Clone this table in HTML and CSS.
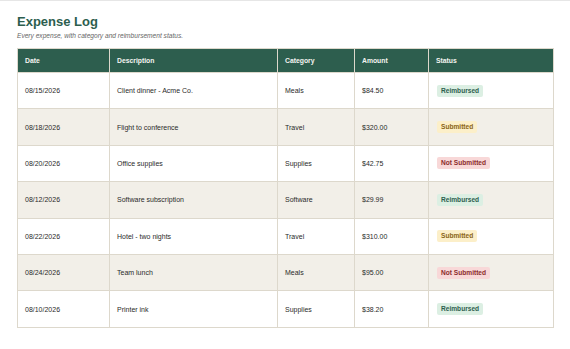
FILE: index.html
```html
<!DOCTYPE html>
<html lang="en">
<head>
<meta charset="utf-8">
<title>Expense Log</title>
<link rel="stylesheet" href="styles.css">
</head>
<body>
<div class="page">
  <h1 class="title">Expense Log</h1>
  <p class="subtitle">Every expense, with category and reimbursement status.</p>
  <table class="log">
    <colgroup>
      <col class="c-date"><col class="c-desc"><col class="c-cat"><col class="c-amt"><col class="c-status">
    </colgroup>
    <thead>
      <tr><th>Date</th><th>Description</th><th>Category</th><th>Amount</th><th>Status</th></tr>
    </thead>
    <tbody>
      <tr><td>08/15/2026</td><td>Client dinner - Acme Co.</td><td>Meals</td><td>$84.50</td><td><span class="badge ok">Reimbursed</span></td></tr>
      <tr><td>08/18/2026</td><td>Flight to conference</td><td>Travel</td><td>$320.00</td><td><span class="badge sub">Submitted</span></td></tr>
      <tr><td>08/20/2026</td><td>Office supplies</td><td>Supplies</td><td>$42.75</td><td><span class="badge not">Not Submitted</span></td></tr>
      <tr><td>08/12/2026</td><td>Software subscription</td><td>Software</td><td>$29.99</td><td><span class="badge ok">Reimbursed</span></td></tr>
      <tr><td>08/22/2026</td><td>Hotel - two nights</td><td>Travel</td><td>$310.00</td><td><span class="badge sub">Submitted</span></td></tr>
      <tr><td>08/24/2026</td><td>Team lunch</td><td>Meals</td><td>$95.00</td><td><span class="badge not">Not Submitted</span></td></tr>
      <tr><td>08/10/2026</td><td>Printer ink</td><td>Supplies</td><td>$38.20</td><td><span class="badge ok">Reimbursed</span></td></tr>
    </tbody>
  </table>
</div>
</body>
</html>
```

FILE: styles.css
```css
html, body {
  margin: 0;
  padding: 0;
  background: #ffffff;
}
body {
  border-top: 1px solid #e6e6e6;
  font-family: "Liberation Sans", Arial, sans-serif;
  color: #2a2a2a;
}
.page {
  padding: 13px 17px 20px 17px;
}
.title {
  margin: 0;
  font-size: 13px;
  line-height: 16px;
  font-weight: 700;
  color: #2d5e4e;
}
.subtitle {
  margin: 1px 0 0 0;
  font-size: 6.6px;
  line-height: 9px;
  font-style: italic;
  color: #666666;
}
.log {
  margin-top: 8px;
  width: 536px;
  border-collapse: collapse;
  table-layout: fixed;
  font-size: 7px;
}
.c-date { width: 92px; }
.c-desc { width: 168px; }
.c-cat { width: 77px; }
.c-amt { width: 74px; }
.c-status { width: 125px; }
.log th, .log td {
  border: 1px solid #ddd8cc;
  text-align: left;
  padding: 0 7px;
}
.log th {
  background: #2d5e4e;
  color: #f4f4f0;
  font-weight: 700;
  height: 23px;
  font-size: 6.8px;
}
.log td {
  height: 35.4px;
  color: #2a2a2a;
}
.log tbody tr:nth-child(even) td {
  background: #f2efe8;
}
.badge {
  display: inline-block;
  margin-left: 1px;
  font-size: 6.6px;
  font-weight: 700;
  line-height: 12px;
  padding: 0 4px;
  border-radius: 2px;
}
.badge.ok { background: #dcefe3; color: #2d5e4e; }
.badge.sub { background: #fcefc9; color: #8a6414; }
.badge.not { background: #f8d8d8; color: #8c2b2b; }
```
